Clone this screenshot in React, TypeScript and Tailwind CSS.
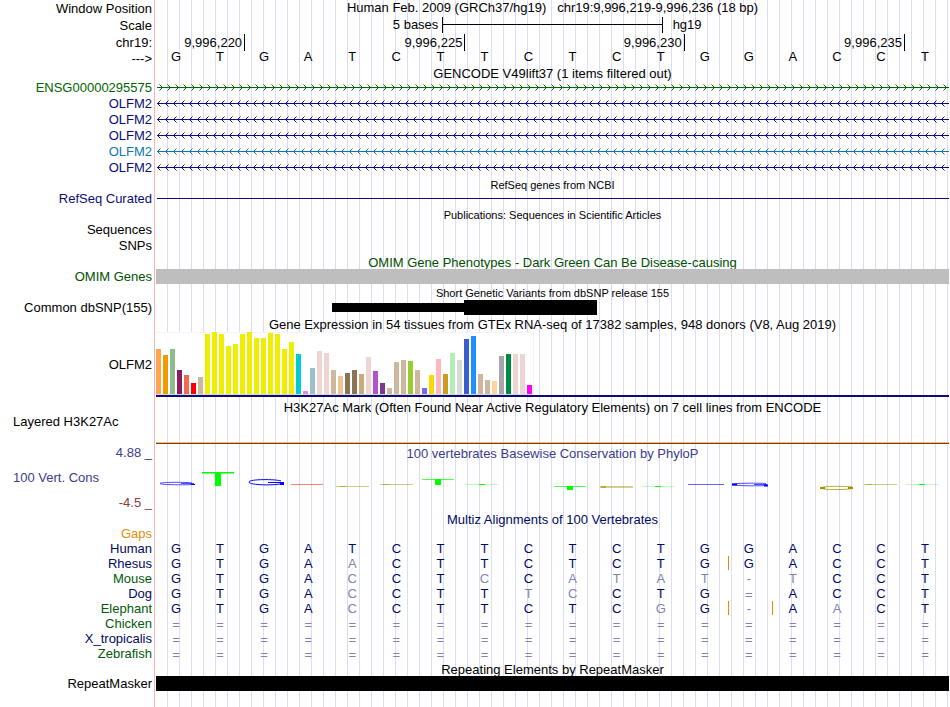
import type { ReactNode } from "react";

const NAVY = "text-[#0c0c78]";
const TREE_NAVY = "text-[#000a64]";
const TREE_GREEN = "text-[#005a0a]";

function Row({
  label = "",
  labelClass = "text-black",
  className = "h-4",
  children,
}: {
  label?: string;
  labelClass?: string;
  className?: string;
  children?: ReactNode;
}) {
  return (
    <div className={`flex gap-1 ${className}`}>
      <div className={`flex w-[152px] shrink-0 items-center justify-end ${labelClass}`}>{label}</div>
      <div className="min-w-0 flex-1">{children}</div>
    </div>
  );
}

function Title({ className = "h-4", children }: { className?: string; children: ReactNode }) {
  return (
    <h2 className={`ml-[156px] flex items-center justify-center pt-[2px] whitespace-pre ${className}`}>
      {children}
    </h2>
  );
}

function Intron({ id, color, forward = false }: { id: string; color: string; forward?: boolean }) {
  return (
    <svg className="block h-4 w-full" aria-hidden="true">
      <defs>
        <pattern id={id} width="8" height="16" patternUnits="userSpaceOnUse">
          <path
            d={forward ? "M3.5 4.5L6.5 7.5L3.5 10.5" : "M4.5 4.5L1.5 7.5L4.5 10.5"}
            fill="none"
            stroke={color}
          />
        </pattern>
      </defs>
      <rect width="100%" height="16" fill={`url(#${id})`} />
      <rect x="1" y="7" width="100%" height="1" fill={color} />
    </svg>
  );
}

const genes = [
  { name: "ENSG00000295575", labelClass: "text-[#006400]", color: "#006400", forward: true },
  { name: "OLFM2", labelClass: NAVY, color: "#0c0c78" },
  { name: "OLFM2", labelClass: NAVY, color: "#0c0c78" },
  { name: "OLFM2", labelClass: NAVY, color: "#0c0c78" },
  { name: "OLFM2", labelClass: "text-[#1074b0]", color: "#1074b0" },
  { name: "OLFM2", labelClass: NAVY, color: "#0c0c78" },
];

const Y = "#eeee00";
const TAN = "#cdb79e";
const ROSE = "#eed5d2";
const tissues: [number, string][] = [
  [45, "#ffa54f"], [39, "#ee9a00"], [45, "#8fbc8f"], [24, "#8b1c62"], [19, "#ee6a50"],
  [11, "#ff0000"], [17, TAN], [60, Y], [62, Y], [60, Y], [48, Y], [50, Y], [60, Y], [62, Y],
  [56, Y], [56, Y], [61, Y], [60, Y], [45, Y], [52, Y], [40, "#00cdcd"], [3, "#ee82ee"],
  [26, "#9ac0cd"], [43, ROSE], [41, ROSE], [24, TAN], [18, "#eec591"], [21, "#8b7355"],
  [24, "#8b7355"], [20, "#cdaa7d"], [37, ROSE], [23, "#b452cd"], [11, "#7a378b"], [6, TAN],
  [32, TAN], [34, TAN], [33, "#9acd32"], [24, TAN], [6, "#7a67ee"], [19, "#ffd700"],
  [35, "#ffb6c1"], [20, "#cd9b1d"], [41, "#b4eeb4"], [34, "#d9d9d9"], [55, "#3a5fcd"],
  [58, "#1e90ff"], [20, TAN], [14, TAN], [13, "#ffd39b"], [38, "#a6a6a6"], [40, "#008b45"],
  [40, ROSE], [40, ROSE], [9, "#ff00ff"],
];

function Expression() {
  return (
    <div className="flex h-[65px] flex-col border-b-2 border-[#0c0c78]">
      <div className="flex h-[63px] w-[378px] items-end gap-[2px] border border-l-0 border-[#f3f3f3] border-b-[#d8d8d8] bg-white">
        {tissues.map(([height, color], i) => (
          <div key={i} className="w-[5px] shrink-0" style={{ height, backgroundColor: color }} />
        ))}
      </div>
    </div>
  );
}

function Conservation() {
  const olive = "#a09600";
  return (
    <svg
      className="block h-[37px] w-full"
      viewBox="156 463 793 37"
      preserveAspectRatio="none"
      role="img"
      aria-label="Conservation scores"
    >
      <g fill="none" stroke="#0000ff">
        <path d="M192 483C187 482 160 482 160 483.500C160 485 187 485 193 484.500M181 483.500H194" strokeWidth="1" opacity=".7" />
        <path d="M281 481C276 479 249 479 249 482C249 485.500 277 485.500 282 483.500M268 482.500H283" strokeWidth="1" />
        <path d="M280 483.500H284" strokeWidth="3" />
        <path d="M191 484.500H195" strokeWidth="1" />
        <path d="M688 484.500H724" opacity=".6" />
        <path d="M766 483.500C758 483 732 483 732 484.500C732 486 760 486 766 485.500M754 484.500H767" opacity=".7" />
        <path d="M732 484.500H737M764 485.500H768" strokeWidth="2" />
      </g>
      <g fill="#00ff00">
        <rect x="202" y="472" width="32" height="1.500" />
        <rect x="215" y="472" width="6" height="14" />
        <rect x="422" y="479" width="32" height="1" opacity=".7" />
        <rect x="435" y="479" width="6" height="6" />
        <rect x="466" y="484" width="32" height="1" opacity=".25" />
        <rect x="479" y="484" width="6" height="1" />
        <rect x="554" y="486" width="32" height="1" opacity=".7" />
        <rect x="567" y="486" width="6" height="4" />
        <rect x="642" y="486" width="32" height="1" opacity=".25" />
        <rect x="655" y="486" width="6" height="1" />
        <rect x="906" y="484" width="32" height="1" opacity=".25" />
        <rect x="919" y="484" width="6" height="1" />
      </g>
      <path d="M291 484.500H323" stroke="#ff0000" opacity=".5" />
      <g fill="none" stroke={olive}>
        <path d="M336 486.500H369M380 484.500H413M864 484.500H897" opacity=".5" />
        <path d="M340 486.500H346M383 484.500H389M866 484.500H872" opacity=".5" />
        <path d="M600 487H633" strokeWidth="2" opacity=".45" />
        <path d="M601 487H606" strokeWidth="2" opacity=".6" />
        <path d="M852 487C847 486 821 486 821 488C821 490 847 490 852 488.500" opacity=".8" />
        <path d="M820 488H825M848 488H853" strokeWidth="2" />
      </g>
    </svg>
  );
}

const bases = "GTGATCTTCTCTGGACCT";

const species: { name: string; seq: string; faint?: number[]; inserts?: number[]; green?: boolean }[] = [
  { name: "Human", seq: bases },
  { name: "Rhesus", seq: "GTGAACTTCTCTGGACCT", faint: [4], inserts: [12] },
  { name: "Mouse", seq: "GTGACCTCCATAT-TCCT", faint: [4, 7, 9, 10, 11, 12, 13, 14], green: true },
  { name: "Dog", seq: "GTGACCTTTCCTG=ACCT", faint: [4, 8, 9, 13] },
  { name: "Elephant", seq: "GTGACCTTCTCGG-AACT", faint: [4, 11, 13, 15], inserts: [12, 13], green: true },
  { name: "Chicken", seq: "==================", green: true },
  { name: "X_tropicalis", seq: "==================" },
  { name: "Zebrafish", seq: "==================", green: true },
];

function Alignment() {
  return (
    <table className="block">
      <tbody className="block">
        {species.map((s) => (
          <tr key={s.name} className="flex h-[15px] leading-[15px]">
            <th
              scope="row"
              className={`mr-1 w-[152px] shrink-0 text-right font-normal ${s.green ? TREE_GREEN : TREE_NAVY}`}
            >
              {s.name}
            </th>
            {s.seq.split("").map((c, i) => (
              <td
                key={i}
                className={`h-[14px] min-w-0 flex-1 border-r pr-[3px] text-center ${
                  s.inserts?.includes(i) ? "border-[#e08c00]" : "border-transparent"
                } ${c === "=" ? "leading-[17px]" : ""} ${
                  c === "=" || s.faint?.includes(i) ? "text-[#8084b2]" : TREE_NAVY
                }`}
              >
                {c}
              </td>
            ))}
          </tr>
        ))}
      </tbody>
    </table>
  );
}

export default function App() {
  return (
    <main className="min-h-screen bg-white bg-[image:repeating-linear-gradient(to_right,#dcdcf8_0px,#dcdcf8_1px,transparent_1px,transparent_12px),linear-gradient(#ffb4b4,#ffb4b4)] bg-[length:100%_100%,1px_100%] bg-[position:167px_0,154px_0] bg-no-repeat pr-px font-['Liberation_Sans',Arial,sans-serif] text-[13px] leading-4 whitespace-nowrap text-black">
      <Row label="Window Position" className="h-[17px]">
        <h1 className="flex h-4 items-center justify-center whitespace-pre">
          {"Human Feb. 2009 (GRCh37/hg19)   chr19:9,996,219-9,996,236 (18 bp)"}
        </h1>
      </Row>
      <Row label="Scale" className="h-[17px]">
        <div className="grid h-[15px] grid-cols-36">
          <span className="col-span-13 pr-1 text-right">5 bases</span>
          <div className="col-span-10 border-x border-black">
            <div className="h-2 border-b border-black" />
          </div>
          <span className="col-span-13 pl-[10px]">hg19</span>
        </div>
      </Row>
      <Row label="chr19:" className="h-[17px]">
        <div className="grid h-[15px] grid-cols-18 text-right leading-[17px]">
          <span className="col-span-2 -mr-px border-r border-black pr-[2px]">9,996,220</span>
          <span className="col-span-5 -mr-px border-r border-black pr-[2px]">9,996,225</span>
          <span className="col-span-5 border-r border-black pr-[2px]">9,996,230</span>
          <span className="col-span-5 border-r border-black pr-[2px]">9,996,235</span>
        </div>
      </Row>
      <Row label="--->" className="h-[15px]">
        <div className="grid grid-cols-18 text-center leading-[11px]">
          {bases.split("").map((b, i) => (
            <span key={i} className="pr-1">
              {b}
            </span>
          ))}
        </div>
      </Row>

      <Title className="h-[14px]">GENCODE V49lift37 (1 items filtered out)</Title>
      {genes.map((g, i) => (
        <Row key={i} label={g.name} labelClass={g.labelClass}>
          <Intron id={`intron-${i}`} color={g.color} forward={g.forward} />
        </Row>
      ))}

      <Title className="h-[15px] text-[11px]">RefSeq genes from NCBI</Title>
      <Row label="RefSeq Curated" labelClass={NAVY} className="h-[15px]">
        <div className="ml-px h-2 border-b border-[#0c0c78]" />
      </Row>

      <Title className="h-4 text-[11px]">Publications: Sequences in Scientific Articles</Title>
      <Row label="Sequences" />
      <Row label="SNPs" />

      <Title className="h-[15px] text-[#005000]">OMIM Gene Phenotypes - Dark Green Can Be Disease-causing</Title>
      <Row label="OMIM Genes" labelClass="text-[#005000]" className="h-[15px]">
        <div className="h-[15px] bg-[#bebebe]" />
      </Row>

      <Title className="h-4 text-[11px]">Short Genetic Variants from dbSNP release 155</Title>
      <Row label="Common dbSNP(155)" className="h-[15px]">
        <div className="grid h-[15px] grid-cols-18 items-center">
          <div className="col-span-3 col-start-5 h-[9px] bg-black" />
          <div className="col-span-3 h-[15px] bg-black" />
        </div>
      </Row>

      <Title className="h-[17px]">
        Gene Expression in 54 tissues from GTEx RNA-seq of 17382 samples, 948 donors (V8, Aug 2019)
      </Title>
      <Row label="OLFM2" className="h-[65px]">
        <Expression />
      </Row>

      <Title className="h-5">
        H3K27Ac Mark (Often Found Near Active Regulatory Elements) on 7 cell lines from ENCODE
      </Title>
      <div className="flex h-[27px]">
        <div className="w-[156px] shrink-0 pl-[13px] leading-[10px]">Layered H3K27Ac</div>
        <div className="flex-1 self-end border-t border-b border-t-[#ffb850] border-b-[#783c3c]" />
      </div>

      <div className="flex h-[68px] text-[#3c3c8c]">
        <div className="flex w-[152px] shrink-0 flex-col justify-between py-px">
          <span className="text-right">4.88 _</span>
          <span className="pl-[13px]">100 Vert. Cons</span>
          <span className="text-right text-[#8c3c3c]">-4.5 _</span>
        </div>
        <div className="ml-1 min-w-0 flex-1">
          <h2 className="flex h-[19px] items-center justify-center">
            100 vertebrates Basewise Conservation by PhyloP
          </h2>
          <Conservation />
        </div>
      </div>

      <Title className="h-[14px] text-[#000a64]">Multiz Alignments of 100 Vertebrates</Title>
      <Row label="Gaps" labelClass="text-[#e68c0a]" className="h-[15px]" />
      <Alignment />

      <Title className="h-[15px]">Repeating Elements by RepeatMasker</Title>
      <Row label="RepeatMasker" className="h-[15px]">
        <div className="h-[15px] bg-black" />
      </Row>
    </main>
  );
}
